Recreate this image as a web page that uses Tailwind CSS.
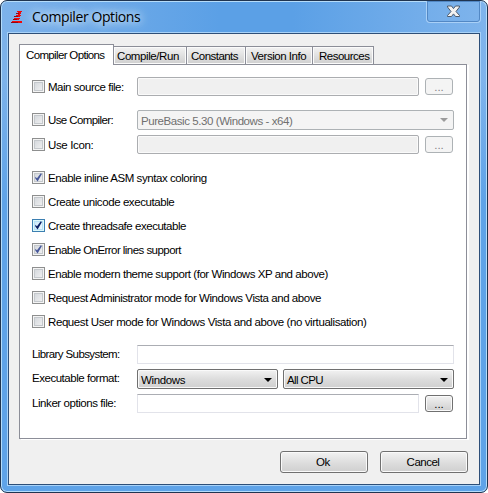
<!DOCTYPE html>
<html lang="en">
<head>
<meta charset="utf-8">
<title>Compiler Options</title>
<script src="https://cdn.jsdelivr.net/npm/@tailwindcss/browser@4"></script>
</head>
<body class="w-[488px] h-[493px] overflow-hidden bg-white font-['Liberation_Sans',Arial,sans-serif] text-[11.5px] leading-[14px] text-black whitespace-nowrap">
<svg class="hidden">
  <symbol id="tick" viewBox="0 0 13 13"><path d="M3.2 5.7 5 7.2 8.8 2.3l1.1.7-4.3 7.5L3.3 7.6z" fill="currentColor"/></symbol>
</svg>
<main class="relative flex flex-col w-[488px] h-[493px] rounded-[7px] border border-[#1f3450] bg-[linear-gradient(to_bottom,transparent_80px,#5fa3e8_200px),linear-gradient(to_right,#7db2ea,#5ba0e6_45%,#5ba0e6_60%,#7fb4ec)] shadow-[inset_0_0_0_1px_#b5dcfa] px-[7px]">
  <header class="flex h-[32px] shrink-0 items-start justify-between">
    <div class="flex">
      <svg class="mt-[10px] ml-[3px] w-[12px] h-[13px]" viewBox="0 0 12 13" shape-rendering="crispEdges">
        <path d="M6 0h5v1h-1v2H9v1h1v1H9v1H3V5h2V4h2V3H5V2h2V1H6zM3 7h6v1H8v1H2V8h1zM1 10h10v2H0v-1h1z" fill="#f00808"/>
        <path d="M5 2h3v1H5zM3 5h4v1H3zM2 8h4v1H2zM0 11h7v1H0z" fill="#980410"/>
      </svg>
      <h1 class="ml-[9px] mt-[6px] text-[14px] leading-[20px] font-['Open_Sans','Noto_Sans',sans-serif] tracking-[-0.4px] [text-shadow:0_0_8px_#fff,0_0_12px_#d5eaff]">Compiler Options</h1>
    </div>
    <button class="flex items-center justify-center w-[55px] h-[22px] mr-[-1px] border border-t-0 border-[#a9d0f7] rounded-b-[4px] shadow-[inset_0_0_0_1px_#5288c5]">
      <svg class="w-[15px] h-[13px]" viewBox="0 0 15 13"><path d="M1.5 1h4l2 2.6 2-2.6h4v1L10 6.5l3.5 4v1h-4l-2-2.6-2 2.6h-4v-1L5 6.5 1.5 2z" fill="#f2f2f2" stroke="#4d5a6c" stroke-linejoin="round"/></svg>
    </button>
  </header>

  <section class="w-[472px] h-[452px] shrink-0 border border-[#2e4f78] bg-[#f0f0f0] shadow-[0_0_0_1px_#a8d2f8] pl-[10px] pt-[10px]">
    <nav class="flex items-end h-[21px] relative">
      <div class="w-[95px] h-[21px] border border-b-0 border-[#8c8e98] bg-white pl-[6px] pt-[3px] tracking-[-0.65px]">Compiler Options</div>
      <div class="w-[73px] h-[19px] border border-l-0 border-[#8c8e98] bg-linear-to-b from-[#f3f3f3] to-[#cfcfcf] shadow-[inset_0_0_0_1px_#fbfbfb] pl-[3px] pt-[2px] tracking-[-0.42px]">Compile/Run</div>
      <div class="w-[59px] h-[19px] border border-l-0 border-[#8c8e98] bg-linear-to-b from-[#f3f3f3] to-[#cfcfcf] shadow-[inset_0_0_0_1px_#fbfbfb] pl-[4px] pt-[2px] tracking-[-0.53px]">Constants</div>
      <div class="w-[67px] h-[19px] border border-l-0 border-[#8c8e98] bg-linear-to-b from-[#f3f3f3] to-[#cfcfcf] shadow-[inset_0_0_0_1px_#fbfbfb] pl-[5px] pt-[2px] tracking-[-0.46px]">Version Info</div>
      <div class="w-[61px] h-[19px] border border-l-0 border-[#8c8e98] bg-linear-to-b from-[#f3f3f3] to-[#cfcfcf] shadow-[inset_0_0_0_1px_#fbfbfb] pl-[6px] pt-[2px] tracking-[-0.5px]">Resources</div>
    </nav>

    <div class="-mt-px w-[448px] h-[375px] border border-[#8c8e98] bg-white shadow-[2px_1px_0_#fff] pl-[12px] pt-[12px]">
      <div class="flex items-center h-[19px]">
        <i class="size-[13px] border border-[#8e8f8f] bg-linear-to-br from-[#cfd3d8] to-[#f5f5f5] shadow-[inset_0_0_0_1px_#f4f4f4,inset_0_0_0_2px_#c4c8cc]"></i>
        <span class="w-[89px] ml-[3px] tracking-[-0.47px]">Main source file:</span>
        <div class="w-[282px] h-[19px] border border-[#abadb0] rounded-[2px] bg-[#f0f0f0] shadow-[inset_0_0_0_1px_#fafafa]"></div>
        <button class="ml-[6px] w-[28px] h-[17px] rounded-[3px] border border-[#adb2b5] bg-[#f4f4f4] text-[#838383] leading-[12px]">...</button>
      </div>
      <div class="flex items-center h-[20px] mt-[14px]">
        <i class="size-[13px] -mt-px border border-[#8e8f8f] bg-linear-to-br from-[#cfd3d8] to-[#f5f5f5] shadow-[inset_0_0_0_1px_#f4f4f4,inset_0_0_0_2px_#c4c8cc]"></i>
        <span class="w-[89px] ml-[3px] tracking-[-0.6px]">Use Compiler:</span>
        <div class="flex items-center justify-between w-[317px] h-[20px] border border-[#adb2b5] rounded-[2px] bg-[#f4f4f4] text-[#707070] pl-[3px] pr-[5px] tracking-[-0.43px]"><span class="mt-px">PureBasic 5.30 (Windows - x64)</span>
          <svg class="w-[8px] h-[4px]" viewBox="0 0 8 4"><path d="M0 0h8L4 4z" fill="#9b9b9b"/></svg></div>
      </div>
      <div class="flex items-center h-[19px] mt-[5px]">
        <i class="size-[13px] border border-[#8e8f8f] bg-linear-to-br from-[#cfd3d8] to-[#f5f5f5] shadow-[inset_0_0_0_1px_#f4f4f4,inset_0_0_0_2px_#c4c8cc]"></i>
        <span class="w-[89px] ml-[3px] tracking-[-0.35px]">Use Icon:</span>
        <div class="w-[282px] h-[19px] border border-[#abadb0] rounded-[2px] bg-[#f0f0f0] shadow-[inset_0_0_0_1px_#fafafa]"></div>
        <button class="ml-[6px] w-[28px] h-[17px] rounded-[3px] border border-[#adb2b5] bg-[#f4f4f4] text-[#838383] leading-[12px]">...</button>
      </div>

      <div class="flex flex-col gap-[10px] mt-[17px]">
        <div class="flex items-center h-[14px] gap-[3px]"><i class="size-[13px] -mt-px border border-[#8e8f8f] bg-linear-to-br from-[#cfd3d8] to-[#f5f5f5] shadow-[inset_0_0_0_1px_#f4f4f4,inset_0_0_0_2px_#c4c8cc]"><svg class="size-[13px] -m-px text-[#47589a]"><use href="#tick"/></svg></i><span class="tracking-[-0.44px]">Enable inline ASM syntax coloring</span></div>
        <div class="flex items-center h-[14px] gap-[3px]"><i class="size-[13px] -mt-px border border-[#8e8f8f] bg-linear-to-br from-[#cfd3d8] to-[#f5f5f5] shadow-[inset_0_0_0_1px_#f4f4f4,inset_0_0_0_2px_#c4c8cc]"></i><span class="tracking-[-0.42px]">Create unicode executable</span></div>
        <div class="flex items-center h-[14px] gap-[3px]"><i class="size-[13px] -mt-px border border-[#3c7fb1] bg-linear-to-br from-[#c5e6f8] to-[#f3fbff] shadow-[inset_0_0_0_1px_#def9fa,inset_0_0_0_2px_#b5e0f6]"><svg class="size-[13px] -m-px text-[#0a2065]"><use href="#tick"/></svg></i><span class="tracking-[-0.46px]">Create threadsafe executable</span></div>
        <div class="flex items-center h-[14px] gap-[3px]"><i class="size-[13px] -mt-px border border-[#8e8f8f] bg-linear-to-br from-[#cfd3d8] to-[#f5f5f5] shadow-[inset_0_0_0_1px_#f4f4f4,inset_0_0_0_2px_#c4c8cc]"><svg class="size-[13px] -m-px text-[#47589a]"><use href="#tick"/></svg></i><span class="tracking-[-0.55px]">Enable OnError lines support</span></div>
        <div class="flex items-center h-[14px] gap-[3px]"><i class="size-[13px] -mt-px border border-[#8e8f8f] bg-linear-to-br from-[#cfd3d8] to-[#f5f5f5] shadow-[inset_0_0_0_1px_#f4f4f4,inset_0_0_0_2px_#c4c8cc]"></i><span class="tracking-[-0.45px]">Enable modern theme support (for Windows XP and above)</span></div>
        <div class="flex items-center h-[14px] gap-[3px]"><i class="size-[13px] -mt-px border border-[#8e8f8f] bg-linear-to-br from-[#cfd3d8] to-[#f5f5f5] shadow-[inset_0_0_0_1px_#f4f4f4,inset_0_0_0_2px_#c4c8cc]"></i><span class="tracking-[-0.446px]">Request Administrator mode for Windows Vista and above</span></div>
        <div class="flex items-center h-[14px] gap-[3px]"><i class="size-[13px] -mt-px border border-[#8e8f8f] bg-linear-to-br from-[#cfd3d8] to-[#f5f5f5] shadow-[inset_0_0_0_1px_#f4f4f4,inset_0_0_0_2px_#c4c8cc]"></i><span class="tracking-[-0.41px]">Request User mode for Windows Vista and above (no virtualisation)</span></div>
      </div>

      <div class="flex items-center h-[19px] mt-[16px]">
        <span class="w-[105px] -mt-[2px] tracking-[-0.6px]">Library Subsystem:</span>
        <div class="w-[317px] h-[19px] border border-[#e2e3ea] border-t-[#abadb3]"></div>
      </div>
      <div class="flex items-center h-[20px] mt-[5px]">
        <span class="w-[105px] -mt-[2px] tracking-[-0.47px]">Executable format:</span>
        <div class="flex items-center justify-between w-[141px] h-[20px] border border-[#707070] rounded-[2px] bg-linear-to-b from-[#f2f2f2] from-0% via-[#dddddd] via-50% to-[#cfcfcf] shadow-[inset_0_0_0_1px_#fafafa] pl-[3px] pr-[5px]"><span class="mt-px tracking-[-0.37px]">Windows</span>
          <svg class="w-[8px] h-[4px] mt-px" viewBox="0 0 8 4"><path d="M0 0h8L4 4z"/></svg></div>
        <div class="flex items-center justify-between w-[171px] h-[20px] ml-[5px] border border-[#707070] rounded-[2px] bg-linear-to-b from-[#f2f2f2] from-0% via-[#dddddd] via-50% to-[#cfcfcf] shadow-[inset_0_0_0_1px_#fafafa] pl-[3px] pr-[5px]"><span class="mt-px tracking-[-0.6px]">All CPU</span>
          <svg class="w-[8px] h-[4px] mt-px" viewBox="0 0 8 4"><path d="M0 0h8L4 4z"/></svg></div>
      </div>
      <div class="flex items-center h-[19px] mt-[5px]">
        <span class="w-[105px] -mt-[2px] tracking-[-0.43px]">Linker options file:</span>
        <div class="w-[282px] h-[19px] border border-[#e2e3ea] border-t-[#abadb3]"></div>
        <button class="ml-[6px] w-[28px] h-[17px] rounded-[3px] border border-[#707070] bg-linear-to-b from-[#f2f2f2] to-[#cfcfcf] shadow-[inset_0_0_0_1px_#fafafa] leading-[12px]">...</button>
      </div>
    </div>

    <footer class="flex gap-[12px] ml-[261px] mt-[12px]">
      <button class="w-[88px] h-[22px] rounded-[3px] border border-[#707070] bg-linear-to-b from-[#f2f2f2] from-0% via-[#dddddd] via-55% to-[#cfcfcf] shadow-[inset_0_0_0_1px_#fafafa] pr-[2px] tracking-[-0.3px]">Ok</button>
      <button class="w-[88px] h-[22px] rounded-[3px] border border-[#707070] bg-linear-to-b from-[#f2f2f2] from-0% via-[#dddddd] via-55% to-[#cfcfcf] shadow-[inset_0_0_0_1px_#fafafa] pr-[2px] tracking-[-0.5px]">Cancel</button>
    </footer>
  </section>
</main>
</body>
</html>
